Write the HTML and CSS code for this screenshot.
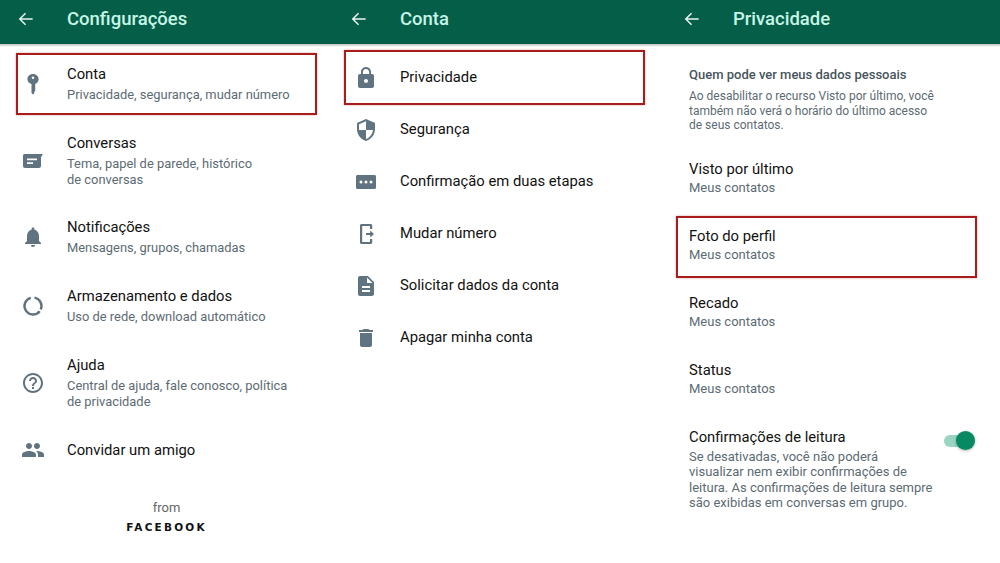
FILE: index.html
```html
<!DOCTYPE html>
<html lang="pt-BR">
<head>
  <meta charset="UTF-8">
  <title>Configurações</title>
  <meta name="viewport" content="width=device-width, initial-scale=1.0">
  <link rel="stylesheet" href="styles.css">
</head>
<body>
  <div class="screens">

    <section class="screen">
      <header class="topbar">
        <svg class="back" viewBox="0 0 18 18"><path d="M16.500 9H2.500M8.500 2.500L2 9l6.500 6.500"/></svg>
        <h1>Configurações</h1>
      </header>
      <div class="list">
        <div class="row marked mark-a">
          <svg class="icon" viewBox="0 0 24 24"><path fill-rule="evenodd" d="M12 2c3.200 0 5.600 2.300 5.600 5.200 0 2.200-1.300 3.900-3.400 4.700V19l-1 1.100v1.300L12 22.500l-1.500-1.500V12C8 11.100 6.400 9.400 6.400 7.200 6.400 4.300 8.800 2 12 2zm0 2.500a1.300 1.300 0 1 0 0 2.600 1.300 1.300 0 0 0 0-2.600z"/></svg>
          <div class="text">
            <div class="name">Conta</div>
            <div class="sub">Privacidade, segurança, mudar número</div>
          </div>
        </div>
        <div class="row row-tight">
          <svg class="icon" viewBox="0 0 24 24"><path d="M3.600 5h18.300l-1.900 3.300V17c0 1.200-.9 2-2 2H4c-1.200 0-2-.8-2-2V6.600C2 5.700 2.700 5 3.600 5zM6 9.500v1.800h10V9.500zm0 3.800v1.800h6v-1.800z" fill-rule="evenodd"/></svg>
          <div class="text">
            <div class="name">Conversas</div>
            <div class="sub">Tema, papel de parede, histórico<br>de conversas</div>
          </div>
        </div>
        <div class="row">
          <svg class="icon" viewBox="0 0 24 24"><path d="M12 22c1.100 0 2-.9 2-2h-4c0 1.100.9 2 2 2zm6-6v-5c0-3.070-1.630-5.640-4.500-6.320V4c0-.83-.67-1.500-1.500-1.500s-1.500.67-1.500 1.500v.68C7.640 5.360 6 7.920 6 11v5l-2 2v1h16v-1l-2-2z"/></svg>
          <div class="text">
            <div class="name">Notificações</div>
            <div class="sub">Mensagens, grupos, chamadas</div>
          </div>
        </div>
        <div class="row">
          <svg class="icon" viewBox="0 0 24 24"><path class="ring" d="M13.480 3.630A8.500 8.500 0 0 1 19.700 15.590M18.700 17.230A8.500 8.500 0 1 1 9.800 3.790"/></svg>
          <div class="text">
            <div class="name">Armazenamento e dados</div>
            <div class="sub">Uso de rede, download automático</div>
          </div>
        </div>
        <div class="row">
          <svg class="icon" viewBox="0 0 24 24"><path d="M11 18h2v-2h-2v2zm1-16C6.480 2 2 6.480 2 12s4.480 10 10 10 10-4.480 10-10S17.520 2 12 2zm0 18c-4.410 0-8-3.590-8-8s3.590-8 8-8 8 3.590 8 8-3.590 8-8 8zm0-14c-2.210 0-4 1.790-4 4h2c0-1.100.9-2 2-2s2 .9 2 2c0 2-3 1.750-3 5h2c0-2.250 3-2.500 3-5 0-2.210-1.790-4-4-4z"/></svg>
          <div class="text">
            <div class="name">Ajuda</div>
            <div class="sub">Central de ajuda, fale conosco, política<br>de privacidade</div>
          </div>
        </div>
        <div class="row">
          <svg class="icon" viewBox="0 0 24 24"><path d="M16 11c1.660 0 2.990-1.340 2.990-3S17.660 5 16 5c-1.660 0-3 1.340-3 3s1.340 3 3 3zm-8 0c1.660 0 2.990-1.340 2.990-3S9.660 5 8 5C6.340 5 5 6.340 5 8s1.340 3 3 3zm0 2c-2.330 0-7 1.170-7 3.500V19h14v-2.500c0-2.330-4.670-3.500-7-3.500zm8 0c-.29 0-.62.02-.97.05 1.160.84 1.970 1.970 1.970 3.450V19h6v-2.500c0-2.330-4.670-3.500-7-3.500z"/></svg>
          <div class="text">
            <div class="name">Convidar um amigo</div>
          </div>
        </div>
      </div>
      <footer class="from">
        <div class="from-label">from</div>
        <div class="from-brand">FACEBOOK</div>
      </footer>
    </section>

    <section class="screen">
      <header class="topbar">
        <svg class="back" viewBox="0 0 18 18"><path d="M16.500 9H2.500M8.500 2.500L2 9l6.500 6.500"/></svg>
        <h1>Conta</h1>
      </header>
      <div class="menu">
        <div class="menu-row marked mark-b">
          <svg class="icon" viewBox="0 0 24 24"><path d="M18 8h-1V6c0-2.760-2.240-5-5-5S7 3.240 7 6v2H6c-1.100 0-2 .9-2 2v10c0 1.100.9 2 2 2h12c1.100 0 2-.9 2-2V10c0-1.100-.9-2-2-2zm-6 9c-1.100 0-2-.9-2-2s.9-2 2-2 2 .9 2 2-.9 2-2 2zm3.100-9H8.900V6c0-1.710 1.390-3.100 3.100-3.100 1.710 0 3.100 1.390 3.100 3.100v2z"/></svg>
          <div class="name">Privacidade</div>
        </div>
        <div class="menu-row">
          <svg class="icon" viewBox="0 0 24 24"><path d="M12 1L3 5v6c0 5.550 3.840 10.740 9 12 5.160-1.260 9-6.450 9-12V5l-9-4zm0 10.990h7c-.53 4.120-3.280 7.790-7 8.940V12H5V6.300l7-3.110v8.800z"/></svg>
          <div class="name">Segurança</div>
        </div>
        <div class="menu-row">
          <svg class="icon" viewBox="0 0 24 24"><path fill-rule="evenodd" d="M3.500 5h17c.9 0 1.500.6 1.500 1.500v11c0 .9-.6 1.500-1.500 1.500h-17C2.600 19 2 18.400 2 17.500v-11C2 5.600 2.600 5 3.500 5zM7 10.500a1.500 1.500 0 1 0 0 3 1.500 1.500 0 0 0 0-3zm5 0a1.500 1.500 0 1 0 0 3 1.500 1.500 0 0 0 0-3zm5 0a1.500 1.500 0 1 0 0 3 1.500 1.500 0 0 0 0-3z"/></svg>
          <div class="name">Confirmação em duas etapas</div>
        </div>
        <div class="menu-row">
          <svg class="icon" viewBox="0 0 24 24"><path d="M18.200 7V3.500C18.200 2.700 17.500 2 16.700 2H7.500C6.700 2 6 2.700 6 3.500v17c0 .8.700 1.500 1.500 1.500h9.200c.8 0 1.500-.7 1.500-1.500V17H16v3H8.200V4H16v3zM12 11h4.200V8.500L20 12l-3.800 3.500V13H12z"/></svg>
          <div class="name">Mudar número</div>
        </div>
        <div class="menu-row">
          <svg class="icon" viewBox="0 0 24 24"><path d="M14 2H6c-1.100 0-1.990.9-1.990 2L4 20c0 1.100.89 2 1.990 2H18c1.100 0 2-.9 2-2V8l-6-6zm2 16H8v-2h8v2zm0-4H8v-2h8v2zm-3-5V3.500L18.500 9H13z"/></svg>
          <div class="name">Solicitar dados da conta</div>
        </div>
        <div class="menu-row">
          <svg class="icon" viewBox="0 0 24 24"><path d="M6 19c0 1.100.9 2 2 2h8c1.100 0 2-.9 2-2V7H6v12zM19 4h-3.500l-1-1h-5l-1 1H5v2h14V4z"/></svg>
          <div class="name">Apagar minha conta</div>
        </div>
      </div>
    </section>

    <section class="screen">
      <header class="topbar">
        <svg class="back" viewBox="0 0 18 18"><path d="M16.500 9H2.500M8.500 2.500L2 9l6.500 6.500"/></svg>
        <h1>Privacidade</h1>
      </header>
      <div class="settings">
        <div class="intro">
          <div class="intro-title">Quem pode ver meus dados pessoais</div>
          <div class="intro-text">Ao desabilitar o recurso Visto por último, você<br>também não verá o horário do último acesso<br>de seus contatos.</div>
        </div>
        <div class="setting">
          <div class="name">Visto por último</div>
          <div class="sub">Meus contatos</div>
        </div>
        <div class="setting marked mark-c">
          <div class="name">Foto do perfil</div>
          <div class="sub">Meus contatos</div>
        </div>
        <div class="setting">
          <div class="name">Recado</div>
          <div class="sub">Meus contatos</div>
        </div>
        <div class="setting">
          <div class="name">Status</div>
          <div class="sub">Meus contatos</div>
        </div>
        <div class="setting setting-toggle">
          <div>
            <div class="name">Confirmações de leitura</div>
            <div class="sub sub-long">Se desativadas, você não poderá<br>visualizar nem exibir confirmações de<br>leitura. As confirmações de leitura sempre<br>são exibidas em conversas em grupo.</div>
          </div>
          <div class="toggle"><div class="knob"></div></div>
        </div>
      </div>
    </section>

  </div>
</body>
</html>
```

FILE: styles.css
```css
html, body {
  margin: 0;
  background: white;
}
body {
  width: 1000px;
  height: 563px;
  overflow: hidden;
  font-family: Roboto, "Liberation Sans", sans-serif;
}
.screens {
  display: grid;
  grid-template-columns: 333px 333px 334px;
  height: 563px;
}
.topbar {
  position: relative;
  height: 44px;
  display: flex;
  align-items: center;
  padding-left: 18px;
  padding-bottom: 7px;
  box-sizing: border-box;
  gap: 33px;
  background: #055f48;
}
/* sombra embaixo da barra */
.topbar::after {
  content: "";
  position: absolute;
  top: 100%;
  left: 0;
  right: 0;
  height: 3px;
  background: linear-gradient(rgba(0, 0, 0, 0.25), rgba(0, 0, 0, 0));
}
.topbar h1 {
  margin: 0;
  font-size: 18.5px;
  font-weight: 500;
  color: #c6f5e6;
}
.back {
  width: 16px;
  height: 16px;
  fill: none;
  stroke: #e8f6f1;
  stroke-width: 1.7;
}
.icon {
  width: 24px;
  height: 24px;
  flex-shrink: 0;
  fill: #5f7380;
}
.ring {
  fill: none;
  stroke: #5f7380;
  stroke-width: 2.400;
}
.name {
  font-size: 14.8px;
  line-height: 20px;
  color: #111;
}
.sub {
  font-size: 13px;
  line-height: 16px;
  color: #5c6b73;
}

.list {
  display: flex;
  flex-direction: column;
  gap: 30px;
  padding-top: 20px;
}
.row {
  display: flex;
  align-items: center;
  gap: 22px;
  padding-left: 21px;
}
.row .icon {
  margin: -2px 0;
}
.row .sub {
  margin-top: 3px;
  font-size: 12.9px;
}
.row-tight {
  margin-bottom: -1px;
}
.from {
  margin-top: 38px;
  text-align: center;
}
.from-label {
  font-size: 13px;
  line-height: 20px;
  color: #666;
}
.from-brand {
  font-family: "DejaVu Sans", sans-serif;
  font-size: 10.5px;
  font-weight: 700;
  line-height: 18px;
  letter-spacing: 2.200px;
  color: #111;
}

.menu {
  padding-top: 8px;
}
.menu-row {
  height: 52px;
  display: flex;
  align-items: center;
  gap: 22px;
  padding-left: 21px;
}
.menu-row .name {
  padding-bottom: 2px;
}

.settings {
  padding: 21px 25px 0 23px;
}
.intro {
  margin-bottom: 27px;
}
.intro-title {
  font-size: 13px;
  font-weight: 500;
  line-height: 20px;
  color: #46555d;
}
.intro-text {
  margin-top: 4px;
  font-size: 12px;
  line-height: 14.600px;
  color: #5c6b73;
}
.setting {
  margin-bottom: 31px;
}
.setting .name {
  margin-top: -1px;
  margin-bottom: 1px;
}
.setting-toggle {
  display: flex;
  justify-content: space-between;
  align-items: flex-start;
}
.sub-long {
  margin-top: 2px;
  line-height: 15.400px;
}
.toggle {
  width: 31px;
  height: 12px;
  margin-top: 7px;
  border-radius: 6px;
  background: #9ad4c3;
  display: flex;
  justify-content: flex-end;
  align-items: center;
}
.knob {
  width: 19px;
  height: 19px;
  flex-shrink: 0;
  border-radius: 50%;
  background: #078a63;
  box-shadow: 0 1px 3px rgba(0, 0, 0, 0.3);
}

/* caixas vermelhas por cima das linhas */
.marked {
  position: relative;
}
.marked::after {
  content: "";
  position: absolute;
  border: 2px solid #a81c1c;
  box-shadow: 0 0 2px rgba(168, 28, 28, 0.4);
}
.mark-a::after {
  top: -11px;
  bottom: -12px;
  left: 16px;
  right: 16px;
}
.mark-b::after {
  top: -2px;
  bottom: -1px;
  left: 11px;
  right: 21px;
}
.mark-c::after {
  top: -10px;
  bottom: -15px;
  left: -13px;
  right: -2px;
}
```
